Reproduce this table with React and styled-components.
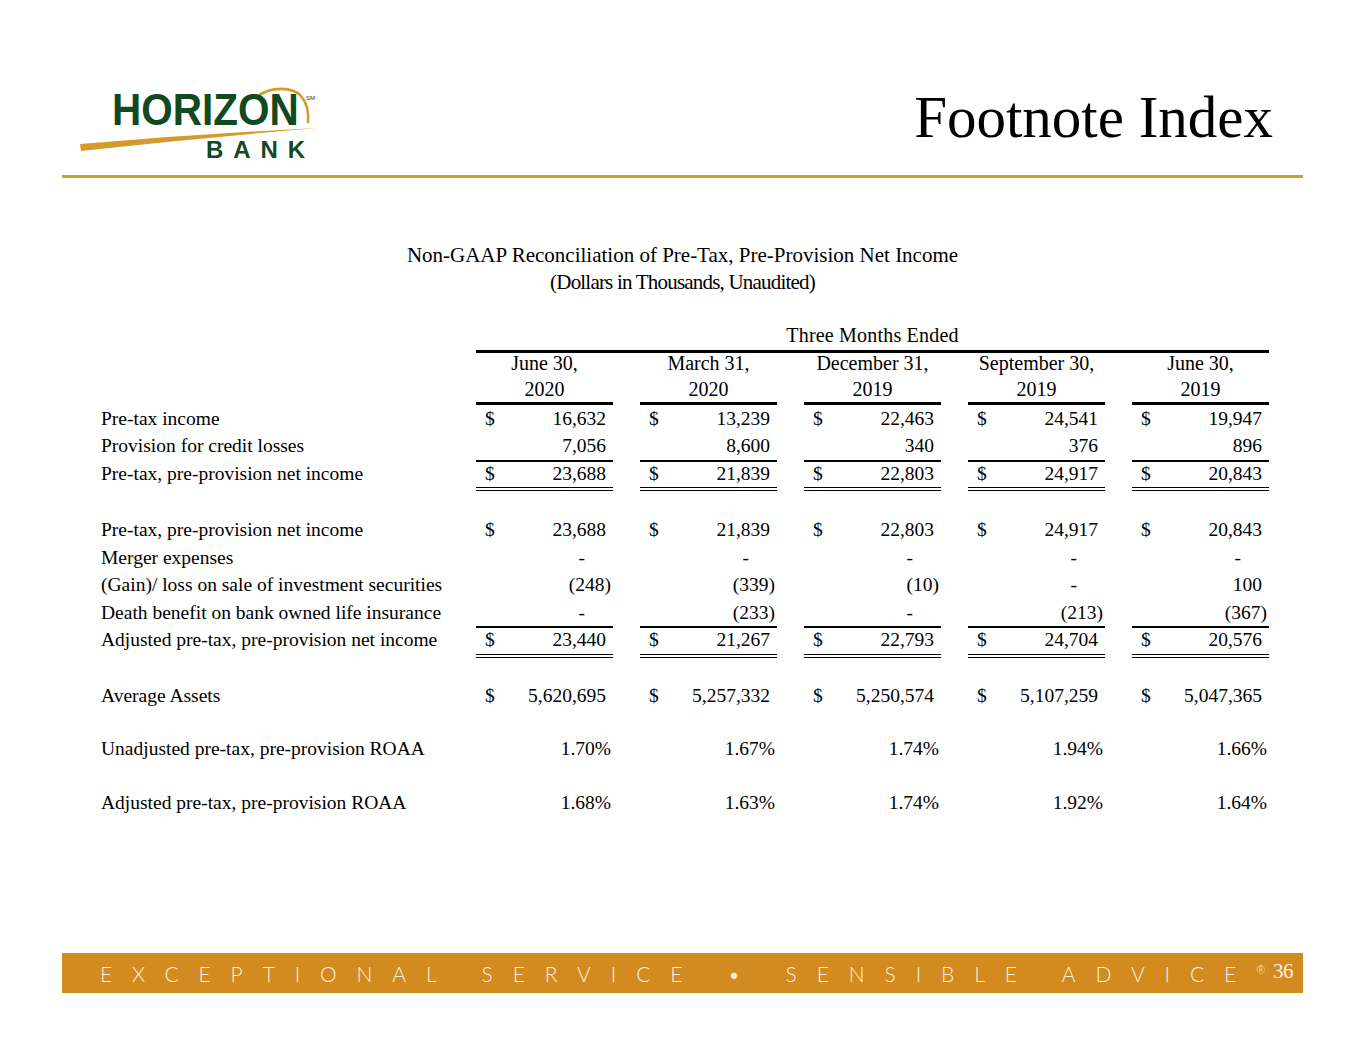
import React from 'react'
import styled, { createGlobalStyle } from 'styled-components'

const GlobalStyle = createGlobalStyle`
  html, body {
    margin: 0;
    padding: 0;
    background: #fff;
  }
  body {
    font-family: "Liberation Serif", "Times New Roman", serif;
    color: #000;
  }
`

const Page = styled.div`
  width: 1365px;
  height: 1055px;
  box-sizing: border-box;
  padding: 0 62px 62px;
  display: flex;
  flex-direction: column;
`

const Header = styled.header`
  height: 175px;
  display: flex;
  justify-content: space-between;
  align-items: flex-end;
`

const LogoWrap = styled.div`
  padding: 0 0 10px 16px;
  line-height: 0;
`

const Title = styled.h1`
  margin: 0;
  padding: 0 30px 28px 0;
  font-weight: normal;
  font-size: 59px;
  line-height: 59px;
`

const GoldRule = styled.div`
  height: 3px;
  background: #c9a22a;
`

const Caption = styled.div`
  margin-top: 64px;
  text-align: center;
  font-size: 21px;
  line-height: 27px;
`

const CaptionLine = styled.div`
  letter-spacing: ${p => (p.$tight ? '-0.8px' : '0')};
`

const Table = styled.div`
  margin-top: 26px;
  padding-left: 39px;
  font-size: 19.5px;
`

const Row = styled.div`
  display: grid;
  grid-template-columns: 348px repeat(5, 137px);
  column-gap: 27px;
  height: 27.5px;
  line-height: 27.5px;
  margin-top: ${p => p.$gap || 0}px;
`

const Span = styled.div`
  grid-column: 2 / 7;
  text-align: center;
  border-bottom: 3px solid #000;
  letter-spacing: 0.2px;
  font-size: 20px;
`

const HeadRow = styled.div`
  display: grid;
  grid-template-columns: 348px repeat(5, 137px);
  column-gap: 27px;
`

const HeadCell = styled.div`
  grid-column: ${p => p.$col + 2};
  text-align: center;
  font-size: 20px;
  line-height: 26px;
  border-bottom: 3px solid #000;
`

const Label = styled.div`
  white-space: nowrap;
`

const Cell = styled.div`
  box-sizing: border-box;
  height: 100%;
  display: flex;
  justify-content: space-between;
  padding: 0 ${p => p.$pad}px 0 9px;
  border-bottom: ${p =>
    p.$line === 'double' ? '4px double #000' : p.$line === 'single' ? '2px solid #000' : 'none'};
  white-space: nowrap;
`

const Footer = styled.footer`
  margin-top: auto;
  height: 40px;
  background: #d38b1f;
  display: flex;
  align-items: center;
  padding: 0 10px 0 38px;
  color: #fbf1de;
`

const Motto = styled.div`
  flex: 1;
  font-family: Lato, "Open Sans", sans-serif;
  font-weight: 300;
  font-size: 21px;
  letter-spacing: 19.9px;
  white-space: pre;
`

const Reg = styled.sup`
  font-size: 11px;
  letter-spacing: 0;
  vertical-align: 8px;
`

const PageNum = styled.div`
  font-size: 21px;
  letter-spacing: -0.5px;
  margin-top: -4px;
`

const cols = [
  ['June 30,', '2020'],
  ['March 31,', '2020'],
  ['December 31,', '2019'],
  ['September 30,', '2019'],
  ['June 30,', '2019'],
]

const rows = [
  { label: 'Pre-tax income', d: true, v: ['16,632', '13,239', '22,463', '24,541', '19,947'] },
  { label: 'Provision for credit losses', v: ['7,056', '8,600', '340', '376', '896'], line: 'single' },
  { label: 'Pre-tax, pre-provision net income', d: true, v: ['23,688', '21,839', '22,803', '24,917', '20,843'], line: 'double' },
  { label: 'Pre-tax, pre-provision net income', d: true, v: ['23,688', '21,839', '22,803', '24,917', '20,843'], gap: 29 },
  { label: 'Merger expenses', v: ['-', '-', '-', '-', '-'] },
  { label: '(Gain)/ loss on sale of investment securities', v: ['(248)', '(339)', '(10)', '-', '100'] },
  { label: 'Death benefit on bank owned life insurance', v: ['-', '(233)', '-', '(213)', '(367)'], line: 'single' },
  { label: 'Adjusted pre-tax, pre-provision net income', d: true, v: ['23,440', '21,267', '22,793', '24,704', '20,576'], line: 'double' },
  { label: 'Average Assets', d: true, v: ['5,620,695', '5,257,332', '5,250,574', '5,107,259', '5,047,365'], gap: 28 },
  { label: 'Unadjusted pre-tax, pre-provision ROAA', v: ['1.70%', '1.67%', '1.74%', '1.94%', '1.66%'], gap: 26 },
  { label: 'Adjusted pre-tax, pre-provision ROAA', v: ['1.68%', '1.63%', '1.74%', '1.92%', '1.64%'], gap: 26 },
]

const padFor = v => {
  if (v === '-') return 28
  if (v.endsWith(')') || v.endsWith('%')) return 2
  return 7
}

const Logo = () => (
  <svg width="250" height="80" viewBox="0 0 250 80">
    <path d="M2 59 Q 120 49 240 43 Q 120 53 3 66 Z" fill="#d49a2c" />
    <path d="M180 11 C 192 2, 214 1, 223 11 C 229 18, 231 27, 230 37" fill="none" stroke="#d49a2c" strokeWidth="2.6" strokeLinecap="round" />
    <text transform="translate(34 40) scale(1 1.1)" fontFamily="Liberation Sans, Arial, sans-serif" fontSize="40.5" fontWeight="bold" fill="#124a1f">HORIZON</text>
    <text x="228" y="15" fontFamily="Liberation Sans, Arial, sans-serif" fontSize="6" fill="#124a1f">SM</text>
    <text x="128" y="73" fontFamily="Liberation Sans, Arial, sans-serif" fontSize="24" fontWeight="bold" fill="#124a1f" textLength="99" lengthAdjust="spacing">BANK</text>
  </svg>
)

export default function App() {
  return (
    <>
      <GlobalStyle />
      <Page>
        <Header>
          <LogoWrap>
            <Logo />
          </LogoWrap>
          <Title>Footnote Index</Title>
        </Header>
        <GoldRule />
        <Caption>
          <CaptionLine>Non-GAAP Reconciliation of Pre-Tax, Pre-Provision Net Income</CaptionLine>
          <CaptionLine $tight>(Dollars in Thousands, Unaudited)</CaptionLine>
        </Caption>
        <Table>
          <Row>
            <Span>Three Months Ended</Span>
          </Row>
          <HeadRow>
            {cols.map((c, i) => (
              <HeadCell key={i} $col={i}>
                {c[0]}
                <br />
                {c[1]}
              </HeadCell>
            ))}
          </HeadRow>
          {rows.map((r, i) => (
            <Row key={i} $gap={r.gap}>
              <Label>{r.label}</Label>
              {r.v.map((v, j) => (
                <Cell key={j} $pad={padFor(v)} $line={r.line}>
                  <span>{r.d ? '$' : ''}</span>
                  <span>{v}</span>
                </Cell>
              ))}
            </Row>
          ))}
        </Table>
        <Footer>
          <Motto>
            EXCEPTIONAL SERVICE • SENSIBLE ADVICE<Reg>®</Reg>
          </Motto>
          <PageNum>36</PageNum>
        </Footer>
      </Page>
    </>
  )
}
